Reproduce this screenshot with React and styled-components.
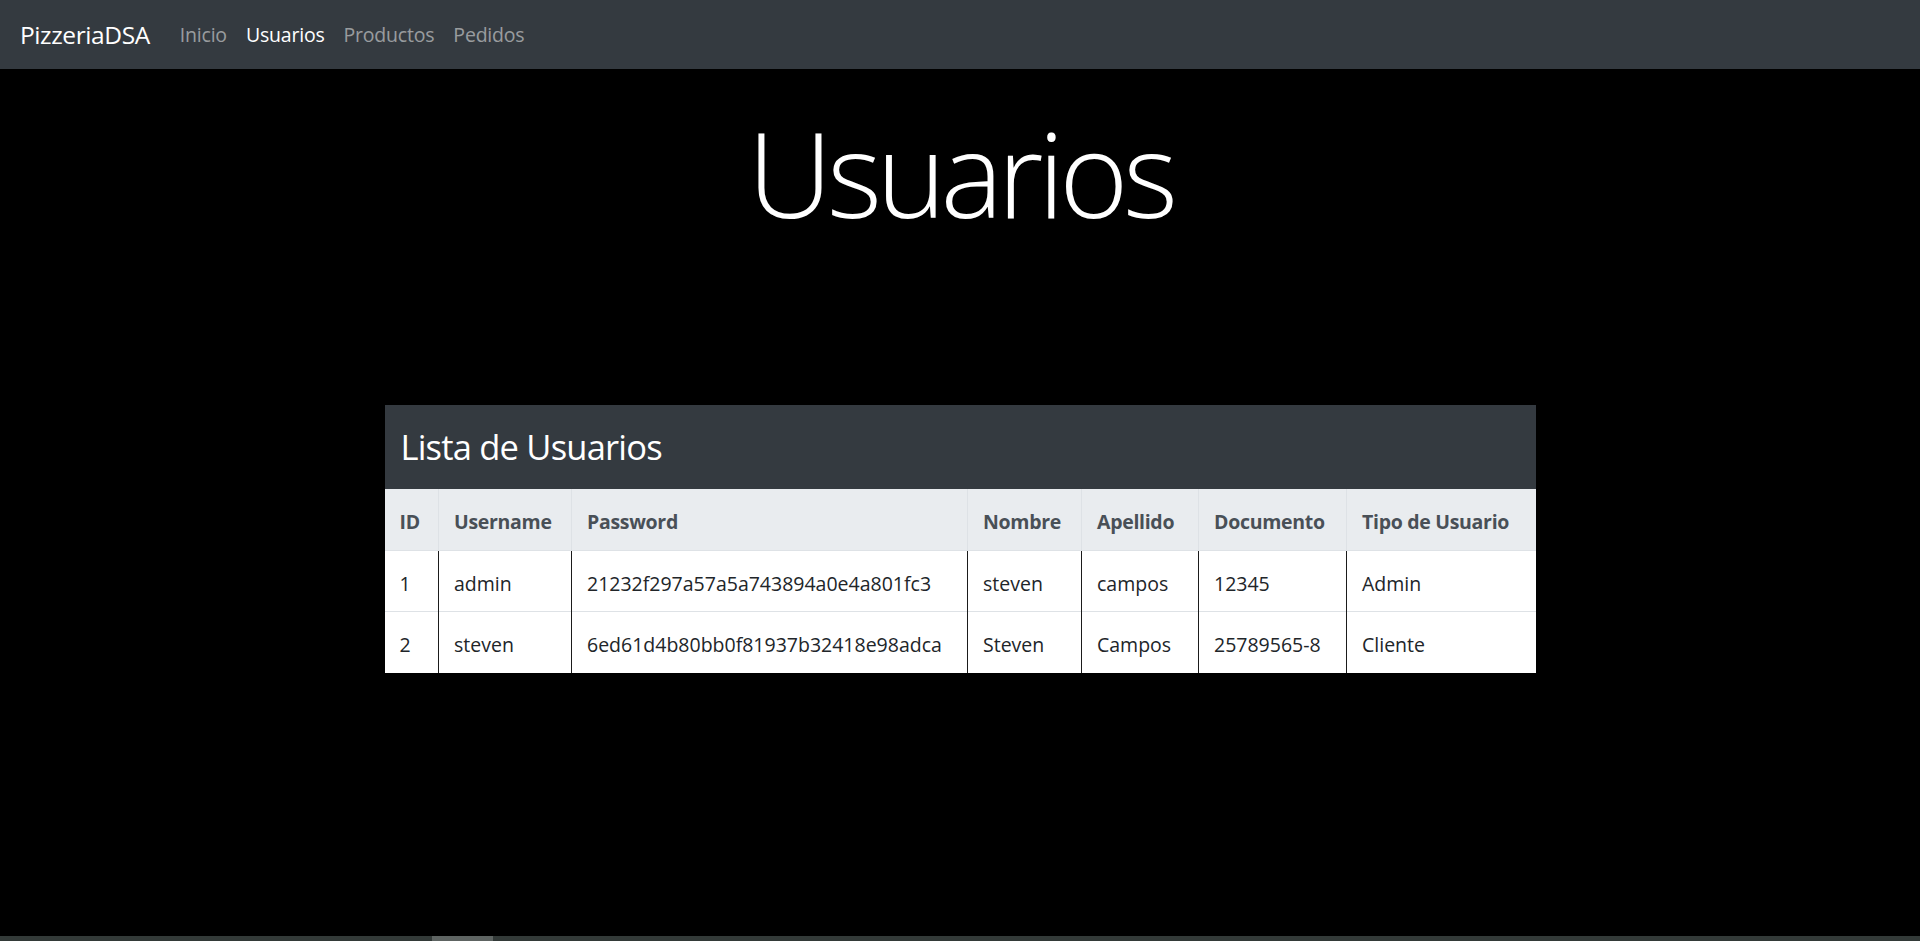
import React from "react"
import styled, { createGlobalStyle } from "styled-components"

const GlobalStyle = createGlobalStyle`
  html, body {
    margin: 0;
    padding: 0;
    background: #000;
    font-family: "Open Sans", "Noto Sans", sans-serif;
  }
`

const links = [
  { label: "Inicio", active: false },
  { label: "Usuarios", active: true },
  { label: "Productos", active: false },
  { label: "Pedidos", active: false },
]

const columns = [
  { title: "ID", width: 54 },
  { title: "Username", width: 133 },
  { title: "Password", width: 396 },
  { title: "Nombre", width: 114 },
  { title: "Apellido", width: 117 },
  { title: "Documento", width: 148 },
  { title: "Tipo de Usuario", width: 189 },
]

const usuarios = [
  ["1", "admin", "21232f297a57a5a743894a0e4a801fc3", "steven", "campos", "12345", "Admin"],
  ["2", "steven", "6ed61d4b80bb0f81937b32418e98adca", "Steven", "Campos", "25789565-8", "Cliente"],
]

function App() {
  return (
    <Page>
      <GlobalStyle />
      <Navbar>
        <Brand>PizzeriaDSA</Brand>
        <NavList>
          {links.map((l) => (
            <NavLink key={l.label} $active={l.active}>{l.label}</NavLink>
          ))}
        </NavList>
      </Navbar>

      <Main>
        <Title>Usuarios</Title>

        <Card>
          <CardHeader>
            <CardTitle>Lista de Usuarios</CardTitle>
          </CardHeader>
          <Table>
            <colgroup>
              {columns.map((c) => (
                <col key={c.title} style={{ width: c.width }} />
              ))}
            </colgroup>
            <thead>
              <tr>
                {columns.map((c) => (
                  <Th key={c.title}>{c.title}</Th>
                ))}
              </tr>
            </thead>
            <tbody>
              {usuarios.map((row) => (
                <tr key={row[0]}>
                  {row.map((cell, i) => (
                    <Td key={i}>{cell}</Td>
                  ))}
                </tr>
              ))}
            </tbody>
          </Table>
        </Card>
      </Main>

      <ScrollTrack>
        <ScrollThumb />
      </ScrollTrack>
    </Page>
  )
}
export default App

const Page = styled.div`
    min-height: 100vh;
    display: flex;
    flex-direction: column;
    background: #000;
`

const Navbar = styled.nav`
    height: 69px;
    background: #343a40;
    display: flex;
    align-items: center;
    padding-left: 20px;
    box-sizing: border-box;
`

const Brand = styled.a`
    color: #fff;
    font-size: 24.5px;
    margin-right: 30px;
    letter-spacing: -0.4px;
    cursor: pointer;
`

const NavList = styled.div`
    display: flex;
    gap: 19px;
`

const NavLink = styled.a`
    color: ${(p) => (p.$active ? "#fff" : "rgba(255, 255, 255, 0.5)")};
    font-size: 19.5px;
    letter-spacing: -0.2px;
    cursor: pointer;
`

const Main = styled.main`
    flex: 1;
    display: flex;
    flex-direction: column;
    align-items: center;
`

const Title = styled.h1`
    margin: 33px 0 0;
    color: #fff;
    font-size: 118px;
    font-weight: 300;
    line-height: 1.2;
    letter-spacing: -5.5px;
`

const Card = styled.div`
    width: 1151px;
    margin-top: 161px;
    background: #fff;
`

const CardHeader = styled.div`
    height: 84px;
    background: #343a40;
    display: flex;
    align-items: center;
    padding: 0 16px;
    box-sizing: border-box;
`

const CardTitle = styled.h3`
    margin: 0;
    color: #fff;
    font-size: 34.5px;
    font-weight: 400;
    letter-spacing: -0.8px;
`

const Table = styled.table`
    width: 100%;
    table-layout: fixed;
    border-collapse: collapse;
    font-size: 19.5px;
    color: #212529;
`

const Th = styled.th`
    height: 62px;
    padding: 4px 15px 0;
    text-align: left;
    background: #e9ecef;
    color: #495057;
    font-weight: 700;
    letter-spacing: -0.3px;
    border-left: 1px solid #dee2e6;
    box-sizing: border-box;

    &:first-child {
      border-left: none;
    }
`

const Td = styled.td`
    height: 61px;
    padding: 4px 15px 0;
    text-align: left;
    background: #fff;
    border-left: 1px solid #1b1b1b;
    border-top: 1px solid #dee2e6;
    white-space: nowrap;
    box-sizing: border-box;

    &:first-child {
      border-left: none;
    }
`

const ScrollTrack = styled.div`
    height: 5px;
    background: #333a38;
    position: relative;
`

const ScrollThumb = styled.div`
    position: absolute;
    left: 432px;
    top: 0;
    width: 61px;
    height: 100%;
    background: #5e6462;
`
